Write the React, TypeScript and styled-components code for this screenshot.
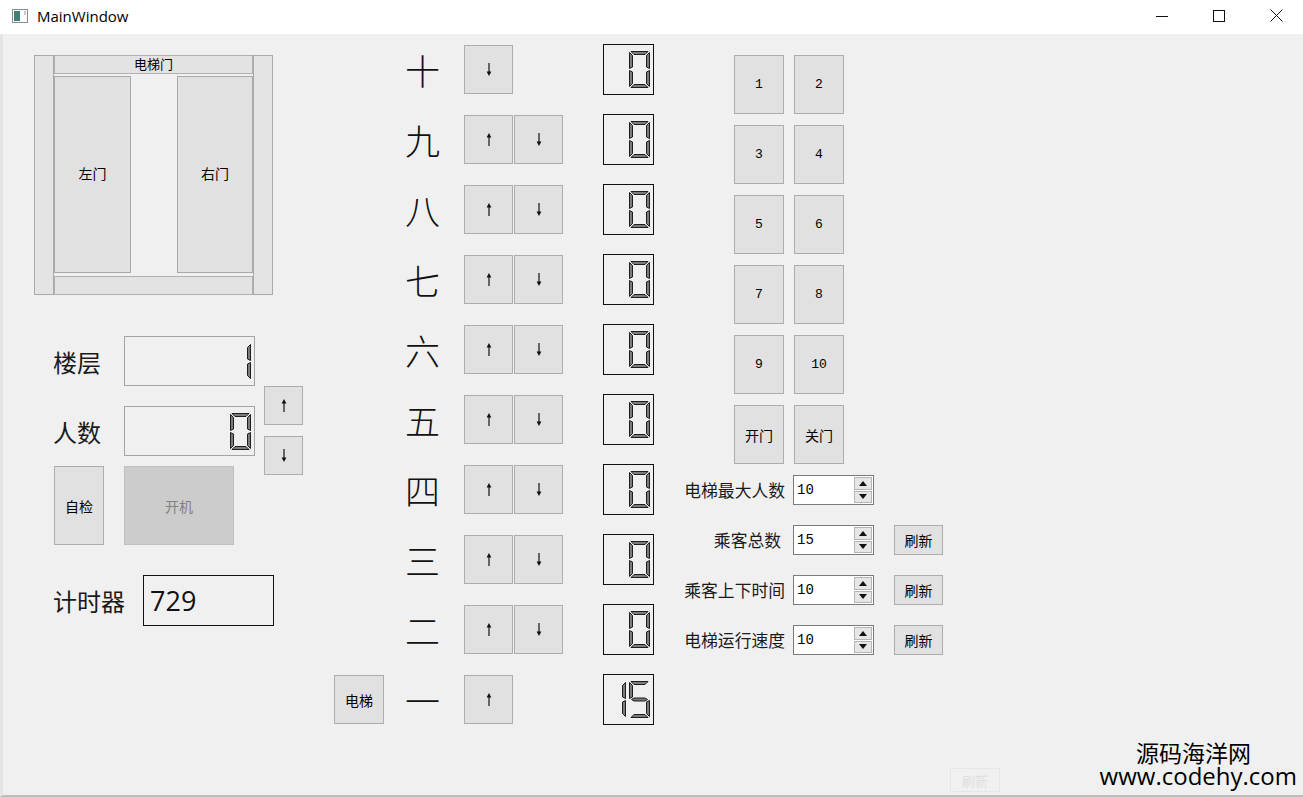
import React from 'react';
import styled, { createGlobalStyle } from 'styled-components';

const GlobalStyle = createGlobalStyle`
  html, body { margin: 0; padding: 0; background: #f0f0f0; }
  body { font-family: "Noto Sans CJK SC", "Noto Sans", sans-serif; color: #111; }
  * { box-sizing: border-box; }
`;

const SEGMENTS: Record<string, string> = {
  '0': 'abcdef', '1': 'bc', '2': 'abged', '3': 'abgcd', '4': 'fgbc',
  '5': 'afgcd', '6': 'afgedc', '7': 'abc', '8': 'abcdefg', '9': 'abcdfg',
};

const SEG_POINTS: Record<string, string> = {
  a: '2,0.5 19,0.5 16,3.5 5,3.5',
  b: '20.5,1.5 20.5,17.5 17.5,16 17.5,4.5',
  c: '20.5,19.5 20.5,35.5 17.5,32.5 17.5,21',
  d: '5,33.5 16,33.5 19,36.5 2,36.5',
  e: '0.5,19.5 3.5,21 3.5,32.5 0.5,35.5',
  f: '0.5,1.5 3.5,4.5 3.5,16 0.5,17.5',
  g: '2.5,18.5 5,17 16,17 18.5,18.5 16,20 5,20',
};

function Digit({ ch }: { ch: string }) {
  const on = SEGMENTS[ch] ?? '';
  return (
    <svg width="21" height="37" viewBox="0 0 21 37">
      {on.split('').map((k) => (
        <polygon key={k} points={SEG_POINTS[k]} fill="#7c7c7c" stroke="#0c0c0c" strokeWidth="0.9" />
      ))}
    </svg>
  );
}

function Arrow({ dir }: { dir: 'up' | 'down' }) {
  return (
    <svg width="8" height="13" viewBox="0 0 8 13">
      {dir === 'up' ? (
        <>
          <line x1="4" y1="3" x2="4" y2="13" stroke="#111" strokeWidth="1.2" />
          <polygon points="4,0 6.4,4.5 1.6,4.5" fill="#111" />
        </>
      ) : (
        <>
          <line x1="4" y1="0" x2="4" y2="10" stroke="#111" strokeWidth="1.2" />
          <polygon points="4,13 6.4,8.5 1.6,8.5" fill="#111" />
        </>
      )}
    </svg>
  );
}

const Window = styled.div`
  position: relative;
  width: 1303px;
  height: 797px;
  display: flex;
  flex-direction: column;
  overflow: hidden;
  background: #f0f0f0;
`;

const TitleBar = styled.div`
  height: 34px;
  flex: none;
  display: flex;
  align-items: center;
  padding-left: 12px;
  padding-bottom: 3px;
  background: #ffffff;
`;

const TitleText = styled.span`
  margin-left: 9px;
  font-family: "Open Sans", "Noto Sans", sans-serif;
  font-size: 15px;
  color: #000;
`;

const Controls = styled.div`
  margin-left: auto;
  display: flex;
  align-items: center;
  gap: 45px;
  padding-right: 20px;
`;

const Body = styled.div`
  flex: 1;
  display: flex;
  padding-left: 31px;
  border-left: 3px solid #e4e4e4;
  border-bottom: 2px solid #bdbdbd;
`;

const LeftCol = styled.div`
  width: 300px;
  padding-top: 21px;
  display: flex;
  flex-direction: column;
`;

const DoorFrame = styled.div`
  width: 239px;
  height: 240px;
  display: flex;
`;

const Pillar = styled.div`
  width: 20px;
  border: 1px solid #a9a9a9;
  background: #e4e4e4;
`;

const DoorCenter = styled.div`
  flex: 1;
  display: flex;
  flex-direction: column;
`;

const Bar = styled.div`
  height: 19px;
  border: 1px solid #b0b0b0;
  background: #e3e3e3;
  font-size: 13px;
  line-height: 16px;
  text-align: center;
  color: #000;
`;

const Doors = styled.div`
  flex: 1;
  display: flex;
  justify-content: space-between;
  padding: 2px 0 3px;
`;

const Door = styled.div<{ $w: number }>`
  width: ${(p) => p.$w}px;
  border: 1px solid #a9a9a9;
  background: #e1e1e1;
  display: flex;
  align-items: center;
  justify-content: center;
  font-size: 14px;
  color: #000;
  padding-bottom: 4px;
`;

const Readouts = styled.div`
  margin-top: 41px;
  display: grid;
  grid-template-columns: 20px 70px 131px 9px 39px;
  grid-template-rows: 50px 20px 50px 10px 79px 30px 51px;
`;

const FieldLabel = styled.div<{ $row: number; $span: number }>`
  grid-row: ${(p) => p.$row};
  grid-column: 1 / span ${(p) => p.$span};
  align-self: center;
  padding-left: 19px;
  font-size: 24px;
  color: #1a1a1a;
`;

const Lcd = styled.div<{ $w: number; $dark?: boolean }>`
  width: ${(p) => p.$w}px;
  height: ${(p) => (p.$dark ? 51 : 50)}px;
  border: 1px solid ${(p) => (p.$dark ? '#111' : '#a4a4a4')};
  display: flex;
  align-items: center;
  justify-content: flex-end;
  gap: 3px;
  padding-right: 3px;
`;

const ReadLcd = styled(Lcd)<{ $row: number }>`
  grid-row: ${(p) => p.$row};
  grid-column: 3;
`;

const Button = styled.div<{ $w: number; $h: number; $size?: number; $mono?: boolean }>`
  width: ${(p) => p.$w}px;
  height: ${(p) => p.$h}px;
  flex: none;
  border: 1px solid #adadad;
  background: #e1e1e1;
  display: flex;
  align-items: center;
  justify-content: center;
  font-size: ${(p) => p.$size ?? 14}px;
  font-family: ${(p) => (p.$mono ? '"Liberation Mono", monospace' : '"Noto Sans CJK SC", sans-serif')};
  color: #000;
`;

const DisabledButton = styled(Button)`
  background: #cccccc;
  border-color: #bfbfbf;
  color: #838383;
`;

const ButtonRow = styled.div`
  grid-row: 5;
  grid-column: 1 / span 3;
  padding-left: 20px;
  display: flex;
  gap: 20px;
`;

const TimerBox = styled.div`
  grid-row: 7;
  grid-column: 3 / span 3;
  margin-left: 19px;
  width: 131px;
  height: 51px;
  border: 1px solid #111;
  padding-left: 6px;
  display: flex;
  align-items: center;
  font-family: "Open Sans", "Noto Sans", sans-serif;
  font-size: 27px;
  color: #111;
`;

const ArrowStack = styled.div`
  grid-row: 1 / span 5;
  grid-column: 5;
  margin-top: 50px;
  display: flex;
  flex-direction: column;
  gap: 11px;
`;

const MidCol = styled.div`
  width: 320px;
  padding-top: 10px;
  display: flex;
  flex-direction: column;
  gap: 19px;
`;

const FloorRow = styled.div`
  height: 51px;
  display: flex;
  align-items: center;
`;

const Slot = styled.div<{ $w: number }>`
  width: ${(p) => p.$w}px;
  flex: none;
  display: flex;
`;

const FloorName = styled.div`
  width: 80px;
  flex: none;
  padding-left: 21px;
  font-size: 35px;
  font-weight: 300;
  color: #111;
  line-height: 1;
`;

const CallGroup = styled.div`
  width: 100px;
  flex: none;
  display: flex;
  gap: 1px;
`;

const FloorLcdWrap = styled.div`
  margin-left: 39px;
`;

const RightCol = styled.div`
  margin-left: 29px;
  padding-top: 21px;
  display: flex;
  flex-direction: column;
`;

const KeyPad = styled.div`
  margin-left: 51px;
  display: grid;
  grid-template-columns: 50px 50px;
  grid-auto-rows: 59px;
  column-gap: 10px;
  row-gap: 11px;
`;

const Form = styled.div`
  margin-top: 11px;
  display: flex;
  flex-direction: column;
  gap: 20px;
`;

const FormRow = styled.div`
  height: 30px;
  display: flex;
  align-items: center;
`;

const FormLabel = styled.div<{ $pad?: number }>`
  width: 110px;
  text-align: right;
  padding-right: ${(p) => p.$pad ?? 8}px;
  font-size: 16.8px;
  color: #1a1a1a;
  white-space: nowrap;
`;

const Spin = styled.div`
  width: 81px;
  height: 30px;
  border: 1px solid #7a7a7a;
  background: #fff;
  display: flex;
  align-items: center;
  padding: 1px;
`;

const SpinValue = styled.div`
  flex: 1;
  padding-left: 2px;
  font-family: "Liberation Mono", monospace;
  font-size: 14px;
  color: #000;
`;

const SpinArrows = styled.div`
  width: 18px;
  height: 26px;
  display: flex;
  flex-direction: column;
  gap: 1px;
`;

const SpinStep = styled.div`
  flex: 1;
  border: 1px solid #b5b5b5;
  background: #e6e6e6;
  display: flex;
  align-items: center;
  justify-content: center;
`;

const RefreshWrap = styled.div`
  margin-left: 20px;
`;

const Watermark = styled.div`
  position: absolute;
  right: 6px;
  bottom: 8px;
  display: flex;
  flex-direction: column;
  align-items: flex-end;
  color: #000;
`;

const WmCn = styled.div`
  font-size: 23px;
  line-height: 22px;
  margin-right: 46px;
`;

const WmUrl = styled.div`
  font-family: "Open Sans", "Noto Sans", sans-serif;
  font-size: 24px;
  line-height: 26px;
`;

const GhostButton = styled.div`
  position: absolute;
  left: 950px;
  top: 768px;
  width: 50px;
  height: 24px;
  border: 1px solid #e6e6e6;
  color: #dedede;
  font-size: 13px;
  display: flex;
  align-items: center;
  justify-content: center;
`;

function AppIcon() {
  return (
    <svg width="16" height="14" viewBox="0 0 16 14">
      <rect x="0.5" y="0.5" width="15" height="13" fill="#fff" stroke="#8a8a8a" />
      <rect x="2" y="2" width="6" height="10" fill="#3f7f78" />
      <rect x="12" y="2" width="2" height="4" fill="#c8c8c8" />
    </svg>
  );
}

function SpinTriangle({ up }: { up?: boolean }) {
  return (
    <svg width="8" height="5" viewBox="0 0 8 5">
      <polygon points={up ? '4,0 8,5 0,5' : '0,0 8,0 4,5'} fill="#111" />
    </svg>
  );
}

function SpinBox({ value }: { value: string }) {
  return (
    <Spin>
      <SpinValue>{value}</SpinValue>
      <SpinArrows>
        <SpinStep><SpinTriangle up /></SpinStep>
        <SpinStep><SpinTriangle /></SpinStep>
      </SpinArrows>
    </Spin>
  );
}

const floors: { name: string; up: boolean; down: boolean; value: string }[] = [
  { name: '十', up: false, down: true, value: '0' },
  { name: '九', up: true, down: true, value: '0' },
  { name: '八', up: true, down: true, value: '0' },
  { name: '七', up: true, down: true, value: '0' },
  { name: '六', up: true, down: true, value: '0' },
  { name: '五', up: true, down: true, value: '0' },
  { name: '四', up: true, down: true, value: '0' },
  { name: '三', up: true, down: true, value: '0' },
  { name: '二', up: true, down: true, value: '0' },
  { name: '一', up: true, down: false, value: '15' },
];

const keys = ['1', '2', '3', '4', '5', '6', '7', '8', '9', '10'];

const settings = [
  { label: '电梯最大人数', value: '10', refresh: false, pad: 8 },
  { label: '乘客总数', value: '15', refresh: true, pad: 12 },
  { label: '乘客上下时间', value: '10', refresh: true, pad: 8 },
  { label: '电梯运行速度', value: '10', refresh: true, pad: 8 },
];

export default function App() {
  return (
    <>
      <GlobalStyle />
      <Window>
        <TitleBar>
          <AppIcon />
          <TitleText>MainWindow</TitleText>
          <Controls>
            <svg width="12" height="12" viewBox="0 0 12 12">
              <line x1="0" y1="6.5" x2="12" y2="6.5" stroke="#111" strokeWidth="1" />
            </svg>
            <svg width="12" height="12" viewBox="0 0 12 12">
              <rect x="0.5" y="0.5" width="11" height="11" fill="none" stroke="#111" strokeWidth="1" />
            </svg>
            <svg width="13" height="13" viewBox="0 0 13 13">
              <line x1="0.5" y1="0.5" x2="12.5" y2="12.5" stroke="#111" strokeWidth="1" />
              <line x1="12.5" y1="0.5" x2="0.5" y2="12.5" stroke="#111" strokeWidth="1" />
            </svg>
          </Controls>
        </TitleBar>

        <Body>
          <LeftCol>
            <DoorFrame>
              <Pillar />
              <DoorCenter>
                <Bar>电梯门</Bar>
                <Doors>
                  <Door $w={77}>左门</Door>
                  <Door $w={76}>右门</Door>
                </Doors>
                <Bar />
              </DoorCenter>
              <Pillar />
            </DoorFrame>

            <Readouts>
              <FieldLabel $row={1} $span={2}>楼层</FieldLabel>
              <ReadLcd $row={1} $w={131}><Digit ch="1" /></ReadLcd>
              <FieldLabel $row={3} $span={2}>人数</FieldLabel>
              <ReadLcd $row={3} $w={131}><Digit ch="0" /></ReadLcd>
              <ArrowStack>
                <Button $w={39} $h={39}><Arrow dir="up" /></Button>
                <Button $w={39} $h={39}><Arrow dir="down" /></Button>
              </ArrowStack>
              <ButtonRow>
                <Button $w={50} $h={79}>自检</Button>
                <DisabledButton $w={110} $h={79}>开机</DisabledButton>
              </ButtonRow>
              <FieldLabel $row={7} $span={3}>计时器</FieldLabel>
              <TimerBox>729</TimerBox>
            </Readouts>
          </LeftCol>

          <MidCol>
            {floors.map((f) => (
              <FloorRow key={f.name}>
                <Slot $w={50}>
                  {f.name === '一' && <Button $w={50} $h={49}>电梯</Button>}
                </Slot>
                <FloorName>{f.name}</FloorName>
                <CallGroup>
                  {f.up && <Button $w={49} $h={49}><Arrow dir="up" /></Button>}
                  {f.down && <Button $w={49} $h={49}><Arrow dir="down" /></Button>}
                </CallGroup>
                <FloorLcdWrap>
                  <Lcd $w={51} $dark>
                    {f.value.split('').map((c, i) => <Digit key={i} ch={c} />)}
                  </Lcd>
                </FloorLcdWrap>
              </FloorRow>
            ))}
          </MidCol>

          <RightCol>
            <KeyPad>
              {keys.map((k) => (
                <Button key={k} $w={50} $h={59} $mono $size={13}>{k}</Button>
              ))}
              <Button $w={50} $h={59}>开门</Button>
              <Button $w={50} $h={59}>关门</Button>
            </KeyPad>
            <Form>
              {settings.map((s) => (
                <FormRow key={s.label}>
                  <FormLabel $pad={s.pad}>{s.label}</FormLabel>
                  <SpinBox value={s.value} />
                  {s.refresh && (
                    <RefreshWrap>
                      <Button $w={49} $h={30}>刷新</Button>
                    </RefreshWrap>
                  )}
                </FormRow>
              ))}
            </Form>
          </RightCol>
        </Body>

        <GhostButton>刷新</GhostButton>
        <Watermark>
          <WmCn>源码海洋网</WmCn>
          <WmUrl>www.codehy.com</WmUrl>
        </Watermark>
      </Window>
    </>
  );
}
